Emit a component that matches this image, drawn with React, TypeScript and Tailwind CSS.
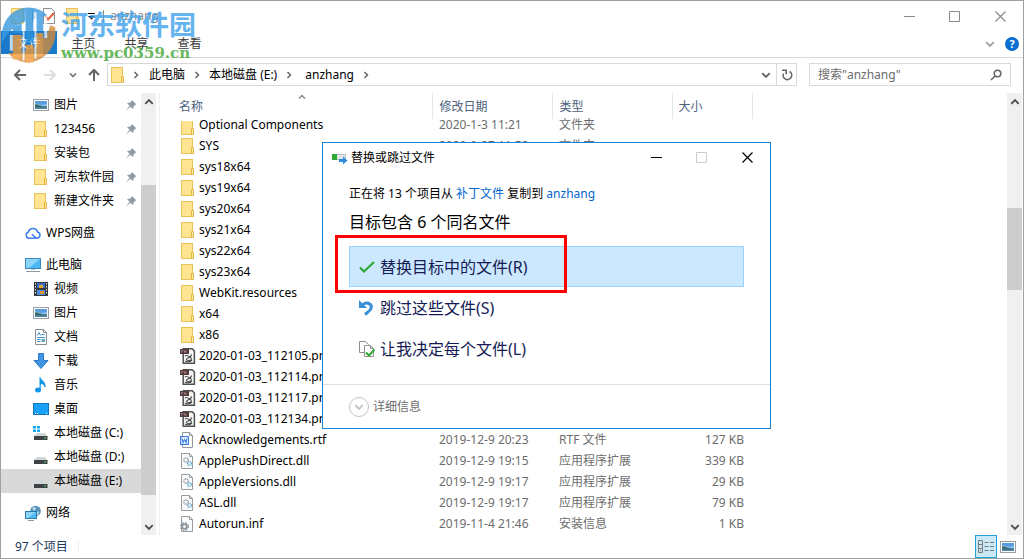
import React, { useState } from 'react';

const FolderIcon = () => (
  <svg className="h-4 w-4 shrink-0" viewBox="0 0 16 16">
    <rect x="1.5" y="0.5" width="11" height="15" fill="#ffe491" stroke="#e9c35a" />
    <path d="M11.5 9.5h2v6h-2z" fill="#ffe9a8" stroke="#e3b740" />
  </svg>
);

const PictureIcon = () => (
  <svg className="h-4 w-4 shrink-0" viewBox="0 0 16 16">
    <rect x="0.5" y="2.5" width="15" height="11" fill="#fff" stroke="#9aa0a6" />
    <path d="M2 4h12v8H2z" fill="#8cc4f0" />
    <path d="M2 4h12v3l-6 1-6-2z" fill="#5a9be0" />
    <path d="M2 7.500c2-1 4 1 7 1.500l5 .5V12H2z" fill="#3f6d6b" />
    <path d="M2 10.500h12V12H2z" fill="#4f86b0" />
  </svg>
);

const CloudIcon = () => (
  <svg className="h-4 w-4 shrink-0" viewBox="0 0 16 16" fill="none" stroke="#3f80f0" strokeWidth="1.600">
    <path d="M10 13.200H4A3.200 3.200 0 0 1 3.400 7a4.700 4.700 0 0 1 9.100 0 3.200 3.200 0 0 1 .1 6.200c-1.600 0-2.600-.9-3.600-2L7.300 9.500" strokeLinecap="round" />
  </svg>
);

const ComputerIcon = () => (
  <svg className="h-4 w-4 shrink-0" viewBox="0 0 16 16">
    <rect x="0.5" y="1.5" width="15" height="10" fill="#4db8f5" stroke="#3b87b8" />
    <path d="M1 2h14L4 11H1z" fill="#8bd5fb" />
    <path d="M1 14.500h14" stroke="#8b9aa5" />
    <path d="M6 12h4v1H6z" fill="#b8c6cf" />
  </svg>
);

const VideoIcon = () => (
  <svg className="h-4 w-4 shrink-0" viewBox="0 0 16 16">
    <rect x="1" y="1" width="14" height="14" fill="#33363b" />
    <path d="M4 2h8v5H4z" fill="#3c6fc4" />
    <path d="M4 9h8v5H4z" fill="#4d8ee0" />
    <path d="M6 4h4v3H6z" fill="#e0a92d" />
    <path d="M7 10h4v3H7z" fill="#d8932b" />
    <path d="M2.500 2v12M13.500 2v12" stroke="#e8e8e8" strokeDasharray="1.500 1.500" />
  </svg>
);

const DocumentIcon = () => (
  <svg className="h-4 w-4 shrink-0" viewBox="0 0 16 16">
    <path d="M2.500.5h8l3 3v12h-11z" fill="#fff" stroke="#8b8f94" />
    <path d="M10.500.5v3h3" fill="none" stroke="#8b8f94" />
    <path d="M4 6.500l2-3 1.500 3M8.500 5.500h3M4 8.500h8M4 10.500h3.500M4 12.500h3.500" fill="none" stroke="#3d8ed0" />
    <path d="M8.500 10h3.500v3H8.500z" fill="#69a6b5" />
  </svg>
);

const DownloadIcon = () => (
  <svg className="h-4 w-4 shrink-0" viewBox="0 0 16 16">
    <path d="M5.500.5h5v7h4.500L8 15.500 1 7.500h4.500z" fill="#3f96e8" stroke="#2c77c2" />
  </svg>
);

const MusicIcon = () => (
  <svg className="h-4 w-4 shrink-0" viewBox="0 0 16 16">
    <ellipse cx="5" cy="13" rx="3" ry="2.500" fill="#1296e8" />
    <path d="M7 13V0.500c1 3 5.500 4 5 9.500-.7-2.500-2.500-3.500-4-3.500" fill="#1296e8" stroke="#1296e8" />
  </svg>
);

const DesktopIcon = () => (
  <svg className="h-4 w-4 shrink-0" viewBox="0 0 16 16">
    <rect x="0.5" y="2.5" width="15" height="11" fill="#1ba1f7" stroke="#1273b5" />
    <path d="M2 12.500h1M4 12.500h1M13 12.500h1" stroke="#fff" />
  </svg>
);

const DriveIcon = ({ system = false }: { system?: boolean }) => (
  <svg className="h-4 w-4 shrink-0" viewBox="0 0 16 16">
    <path d="M4 8h8l2 3H1z" fill="#d2d5d9" />
    <path d="M1 11h13.500v4H1z" fill="#3e4246" />
    <path d="M11 13h2" stroke="#3ce05a" />
    {system && <path d="M0 1h3v2.500H0zM4 1h3v2.500H4zM0 4.500h3V7H0zM4 4.500h3V7H4z" fill="#17a9f0" />}
  </svg>
);

const NetworkIcon = () => (
  <svg className="h-4 w-4 shrink-0" viewBox="0 0 16 16">
    <circle cx="10.500" cy="6" r="5.300" fill="#5794bd" />
    <path d="M7 3l3-1 1 2-2 2zM11 6l3 1-1 3-3-1z" fill="#b8dcec" />
    <rect x="0.500" y="6.500" width="11" height="7" fill="#4db8f5" stroke="#2e79ac" />
    <path d="M1 7h10l-8 6H1z" fill="#8bd5fb" />
    <path d="M3 15.500h6" stroke="#8b9aa5" />
  </svg>
);

const PinIcon = () => (
  <svg className="h-3 w-3 shrink-0" viewBox="0 0 12 12">
    <path d="M7 1l4.500 4.500-1.300.2L8.500 7.500l-.2 2.800L5.500 7.800 1 11.500l3.500-4.700L2 4l2.800-.2L6.700 2z" fill="#8d9ba6" />
  </svg>
);

const ImageFileIcon = () => (
  <svg className="h-4 w-4 shrink-0" viewBox="0 0 16 16">
    <path d="M3.200.8h9l2.200 2.200v12.200H3.200z" fill="#f4f4f4" stroke="#505050" strokeWidth="1.500" />
    <path d="M0 1h9v5H0z" fill="#51383a" />
    <path d="M1.500 4.500v-2h1.500v1M4.500 4.500v-2l1.500 2v-2" fill="none" stroke="#c9a5a0" strokeWidth=".6" />
    <path d="M5 8c2-1.500 4 .5 5.500 1.500s1 3-1.500 3-3.500-1.500-1-2.500 3.500-1.500 3.500-3.500M5 13c2 1 5 1 7-1" fill="none" stroke="#4b4b4b" strokeWidth="1.100" />
  </svg>
);

const WordFileIcon = () => (
  <svg className="h-4 w-4 shrink-0" viewBox="0 0 16 16">
    <path d="M2.500.5h7l3 3v12h-10z" fill="#fff" stroke="#8f979f" />
    <path d="M9.500.5v3h3" fill="none" stroke="#8f979f" />
    <rect x="0.600" y="4.600" width="7.800" height="7.800" fill="#fff" stroke="#3f80e8" strokeWidth="1.200" />
    <path d="M2 6.500l1 4 1.500-3 1.500 3 1-4" fill="none" stroke="#3f80e8" strokeWidth="1.200" />
  </svg>
);

const DllFileIcon = () => (
  <svg className="h-4 w-4 shrink-0" viewBox="0 0 16 16">
    <path d="M1.500.5h8l3 3v12h-11z" fill="#f9fafb" stroke="#989da2" />
    <path d="M9.500.5v3h3" fill="none" stroke="#989da2" />
    <circle cx="6" cy="7" r="2.200" fill="none" stroke="#87939c" strokeWidth="1.300" strokeDasharray="1.200 .5" />
    <circle cx="9.500" cy="10.500" r="2" fill="#d6ecf8" stroke="#76aed0" strokeWidth="1.200" strokeDasharray="1.200 .5" />
  </svg>
);

const InfFileIcon = () => (
  <svg className="h-4 w-4 shrink-0" viewBox="0 0 16 16">
    <path d="M1.500.5h8l3 3v12h-11z" fill="#f9fafb" stroke="#989da2" />
    <path d="M9.500.5v3h3" fill="none" stroke="#989da2" />
    <circle cx="4.500" cy="10.500" r="3.800" fill="none" stroke="#8e979e" strokeWidth="1.600" strokeDasharray="1.600 1.400" />
    <circle cx="4.500" cy="10.500" r="2.400" fill="#eef1f3" stroke="#8e979e" strokeWidth="1.800" />
  </svg>
);

const Chevron = ({ className }: { className: string }) => (
  <svg className={className} viewBox="0 0 8 8" fill="none" stroke="currentColor" strokeWidth="1.500">
    <path d="M1 2.500l3 3 3-3" />
  </svg>
);

const treeItems = [
  { label: '图片', icon: <PictureIcon />, pinned: true },
  { label: '123456', icon: <FolderIcon />, pinned: true },
  { label: '安装包', icon: <FolderIcon />, pinned: true },
  { label: '河东软件园', icon: <FolderIcon />, pinned: true },
  { label: '新建文件夹', icon: <FolderIcon />, pinned: true },
  { label: 'WPS网盘', icon: <CloudIcon />, root: true },
  { label: '此电脑', icon: <ComputerIcon />, root: true },
  { label: '视频', icon: <VideoIcon /> },
  { label: '图片', icon: <PictureIcon /> },
  { label: '文档', icon: <DocumentIcon /> },
  { label: '下载', icon: <DownloadIcon /> },
  { label: '音乐', icon: <MusicIcon /> },
  { label: '桌面', icon: <DesktopIcon /> },
  { label: '本地磁盘 (C:)', icon: <DriveIcon system /> },
  { label: '本地磁盘 (D:)', icon: <DriveIcon /> },
  { label: '本地磁盘 (E:)', icon: <DriveIcon />, selected: true },
  { label: '网络', icon: <NetworkIcon />, root: true },
];

const folderNames = ['sys18x64', 'sys19x64', 'sys20x64', 'sys21x64', 'sys22x64', 'sys23x64', 'WebKit.resources', 'x64', 'x86'];
const imageNames = ['112105', '112114', '112117', '112134'];

const files = [
  { name: 'Optional Components', icon: <FolderIcon />, date: '2020-1-3 11:21', type: '文件夹', size: '' },
  { name: 'SYS', icon: <FolderIcon />, date: '2020-9-27 11:52', type: '文件夹', size: '' },
  // rows behind the dialog only show their name
  ...folderNames.map((name) => ({ name, icon: <FolderIcon />, date: '', type: '', size: '' })),
  ...imageNames.map((time) => ({ name: `2020-01-03_${time}.png`, icon: <ImageFileIcon />, date: '', type: '', size: '' })),
  { name: 'Acknowledgements.rtf', icon: <WordFileIcon />, date: '2019-12-9 20:23', type: 'RTF 文件', size: '127 KB' },
  { name: 'ApplePushDirect.dll', icon: <DllFileIcon />, date: '2019-12-9 19:15', type: '应用程序扩展', size: '339 KB' },
  { name: 'AppleVersions.dll', icon: <DllFileIcon />, date: '2019-12-9 19:17', type: '应用程序扩展', size: '29 KB' },
  { name: 'ASL.dll', icon: <DllFileIcon />, date: '2019-12-9 19:17', type: '应用程序扩展', size: '79 KB' },
  { name: 'Autorun.inf', icon: <InfFileIcon />, date: '2019-11-4 21:46', type: '安装信息', size: '1 KB' },
];

const WindowButtons = ({ inactiveMax = false }: { inactiveMax?: boolean }) => (
  <div className="flex h-full">
    <button aria-label="最小化" className="flex w-[46px] items-center justify-center">
      <svg className="h-[11px] w-[11px]" viewBox="0 0 11 11" stroke="currentColor"><path d="M0 5.500h11" /></svg>
    </button>
    <button aria-label="最大化" disabled={inactiveMax} className="flex w-[45px] items-center justify-center disabled:text-[#cccccc]">
      <svg className="h-[11px] w-[11px]" viewBox="0 0 11 11" fill="none" stroke="currentColor"><path d="M.5.5h10v10H.5z" /></svg>
    </button>
    <button aria-label="关闭" className="flex w-[46px] items-center justify-center">
      <svg className="h-[11px] w-[11px]" viewBox="0 0 11 11" stroke="currentColor" strokeWidth="1.200"><path d="M.5.5l10 10M10.500.5l-10 10" /></svg>
    </button>
  </div>
);

const TitleBar = () => (
  <div className="flex h-[30px] shrink-0 items-center justify-between text-[#8a8a8a]">
    <div className="flex items-center pl-[9px]">
      <svg className="h-4 w-4" viewBox="0 0 16 16">
        <path d="M1.500.5h12v15h-12z" fill="#ffe491" stroke="#e9c35a" />
        <path d="M8 7l1 2.500h2.500l-2 1.500.8 2.500L8 12l-2.300 1.500.8-2.500-2-1.500H7z" fill="#fff" />
      </svg>
      <span className="mx-1.5 h-3 w-px bg-[#8a8a8a]" />
      <svg className="mx-[2px] h-4 w-4" viewBox="0 0 16 16" fill="none">
        <path d="M2.500.5h8l3 3v12h-11z" fill="#fff" stroke="#8b8f94" />
        <path d="M4 8l3 3.500L13 5" stroke="#e0603c" strokeWidth="2" />
      </svg>
      <span className="mr-1 ml-1.5"><FolderIcon /></span>
      <svg className="h-3 w-3 text-black" viewBox="0 0 12 12">
        <path d="M3 3.500h7" stroke="currentColor" />
        <path d="M3 6h7L6.500 9.500z" fill="currentColor" />
      </svg>
      <span className="mx-1.5 h-3 w-px bg-[#8a8a8a]" />
      <h1>anzhang</h1>
    </div>
    <WindowButtons />
  </div>
);

const Ribbon = () => (
  <div className="flex h-[27px] shrink-0 items-start justify-between border-b border-[#dadbdc] text-[#3c3c3c]">
    <div className="flex">
      <button className="h-[23px] w-14 bg-[#1979ca] pt-0.5 text-white">文件</button>
      <button className="h-[23px] w-[53px] pt-0.5">主页</button>
      <button className="h-[23px] w-[53px] pt-0.5">共享</button>
      <button className="h-[23px] w-[53px] pt-0.5">查看</button>
    </div>
    <div className="flex h-[26px] items-center gap-2.5 pr-1">
      <button aria-label="展开功能区"><Chevron className="h-2.5 w-2.5 text-[#a0a0a0]" /></button>
      <button aria-label="帮助" className="flex h-3.5 w-3.5 items-center justify-center rounded-full bg-[#0a6fd0] text-[11px] font-bold text-white">?</button>
    </div>
  </div>
);

const AddressBar = () => (
  <div className="flex h-[35px] shrink-0 items-center pr-3 pb-0.5 text-[#666666]">
    <div className="flex w-[106px] items-center pl-3">
      <button aria-label="后退">
        <svg className="h-3.5 w-3.5" viewBox="0 0 14 14" fill="none" stroke="currentColor" strokeWidth="2"><path d="M13 7H2M7 2L2 7l5 5" /></svg>
      </button>
      <button aria-label="前进" className="ml-4 text-[#dddddd]">
        <svg className="h-3.5 w-3.5" viewBox="0 0 14 14" fill="none" stroke="currentColor" strokeWidth="2"><path d="M1 7h11M7 2l5 5-5 5" /></svg>
      </button>
      <button aria-label="最近位置" className="ml-3"><Chevron className="h-2 w-2" /></button>
      <button aria-label="上移" className="ml-2.5">
        <svg className="h-3.5 w-3.5" viewBox="0 0 14 14" fill="none" stroke="currentColor" strokeWidth="2"><path d="M7 13V2M2 7l5-5 5 5" /></svg>
      </button>
    </div>
    <nav className="flex h-[23px] flex-1 items-center border border-[#d9d9d9] pl-0.5 text-black">
      <FolderIcon />
      <Chevron className="mx-1.5 h-2 w-2 -rotate-90 text-[#666666]" />
      <a href="#pc" className="ml-[3px]">此电脑</a>
      <Chevron className="mx-2 h-2 w-2 -rotate-90 text-[#666666]" />
      <a href="#e">本地磁盘 (E:)</a>
      <Chevron className="mx-2 h-2 w-2 -rotate-90 text-[#666666]" />
      <a href="#anzhang" className="ml-1">anzhang</a>
      <Chevron className="mx-2 h-2 w-2 -rotate-90 text-[#666666]" />
      <div className="ml-auto flex h-full text-[#666666]">
        <button aria-label="历史记录" className="flex w-5 items-center justify-center"><Chevron className="h-2.5 w-2.5" /></button>
        <button aria-label="刷新" className="flex w-5 items-center justify-center border-l border-[#d9d9d9]">
          <svg className="h-3 w-3" viewBox="0 0 12 12" fill="none" stroke="currentColor" strokeWidth="1.600"><path d="M8.500 2.500a4.300 4.300 0 1 1-6 2M1 1.300h4.200v4" /></svg>
        </button>
      </div>
    </nav>
    <div className="ml-3 flex h-[23px] w-[20%] max-w-[202px] items-center border border-[#d9d9d9] px-2">
      <input aria-label="搜索" placeholder={'搜索"anzhang"'} className="min-w-0 flex-1 outline-none placeholder:text-[#6d6d6d]" />
      <svg className="h-3 w-3" viewBox="0 0 12 12" fill="none" stroke="currentColor" strokeWidth="1.600"><circle cx="7.500" cy="4.500" r="3.300" /><path d="M5 7l-4 4" /></svg>
    </div>
  </div>
);

const ScrollBar = ({ before, thumb }: { before: string; thumb: string }) => (
  <div className="flex w-[15px] shrink-0 flex-col bg-[#f0f0f0] text-[#505050]">
    <button aria-label="向上滚动" className="flex h-[17px] shrink-0 items-center justify-center">
      <Chevron className="h-2.5 w-2.5 rotate-180" />
    </button>
    <div className="flex min-h-0 flex-1 flex-col">
      <div className={before} />
      <div className={`bg-[#cdcdcd] ${thumb}`} />
    </div>
    <button aria-label="向下滚动" className="flex h-[17px] shrink-0 items-center justify-center">
      <Chevron className="h-2.5 w-2.5" />
    </button>
  </div>
);

const Sidebar = () => (
  <aside className="flex w-[159px] shrink-0 border-r border-[#f0f0f0]">
    <nav className="flex flex-1 flex-col">
      {treeItems.map((item, index) => (
        <a
          key={index}
          href="#"
          className={`flex h-6 shrink-0 items-center pr-1 text-black ${item.root ? 'mt-2 pl-6' : 'pl-8'} ${item.selected ? 'bg-[#d9d9d9]' : ''}`}
        >
          {item.icon}
          <span className="ml-[5px] flex-1 whitespace-nowrap">{item.label}</span>
          {item.pinned && <PinIcon />}
        </a>
      ))}
    </nav>
    <div className="mr-[3px] flex"><ScrollBar before="h-[18.400%]" thumb="h-[76%]" /></div>
  </aside>
);

const FileList = () => (
  <div className="min-w-0 flex-1 overflow-hidden">
    <table className="w-full table-fixed border-collapse text-[#6d6d6d]">
      <colgroup>
        <col className="w-[272px]" />
        <col className="w-[120px]" />
        <col className="w-[120px]" />
        <col className="w-20" />
        <col />
      </colgroup>
      <thead className="text-left text-[#4c607a]">
        <tr className="h-[26px]">
          <th className="relative border-r border-[#e5e5e5] p-0 pt-0.5 pl-[19px] font-normal">
            名称
            <Chevron className="absolute top-0 left-[138px] h-2 w-2 rotate-180 text-[#8a8a8a]" />
          </th>
          <th className="border-r border-[#e5e5e5] p-0 pt-0.5 pl-[7px] font-normal">修改日期</th>
          <th className="border-r border-[#e5e5e5] p-0 pt-0.5 pl-[7px] font-normal">类型</th>
          <th className="border-r border-[#e5e5e5] p-0 pt-0.5 pl-1.5 font-normal">大小</th>
          <th className="p-0" />
        </tr>
      </thead>
      <tbody className="leading-[21px] whitespace-nowrap">
        {files.map((file, index) => (
          // the topmost row is partly scrolled under the header
          <tr key={file.name} className={index === 0 ? 'h-4' : 'h-[21px]'}>
            <td className="p-0 pl-5">
              <div className={`flex text-black ${index === 0 ? 'h-4 items-end' : 'h-[21px] items-center'}`}>
                <span className={index === 0 ? 'flex h-3.5 items-end overflow-hidden' : 'flex'}>{file.icon}</span>
                <span className="ml-[3px]">{file.name}</span>
              </div>
            </td>
            <td className="p-0 pl-[7px]">
              <div className={`flex ${index === 0 ? 'h-4 items-end' : 'h-[21px] items-center'}`}>{file.date}</div>
            </td>
            <td className="p-0 pl-[7px]">
              <div className={`flex ${index === 0 ? 'h-4 items-end' : 'h-[21px] items-center'}`}>{file.type}</div>
            </td>
            <td className="p-0 pr-2 text-right leading-4">{file.size}</td>
            <td className="p-0" />
          </tr>
        ))}
      </tbody>
    </table>
  </div>
);

const ReplaceDialog = () => (
  <div role="dialog" aria-labelledby="dialog-title" className="absolute top-[141px] left-[321px] w-[449px] border border-[#1883d7] bg-white text-black">
    <div className="flex h-[29px] items-center justify-between">
      <div className="flex items-center gap-[3px] pl-[9px]">
        <svg className="h-4 w-4" viewBox="0 0 16 16">
          <path d="M.5 4.500h13v5H.5z" fill="#e4e6e8" stroke="#b5b9bd" />
          <path d="M0 4h5v6H0z" fill="#2fa836" />
          <path d="M7 9h4V6.500l4.500 4-4.500 4V12H7z" fill="#2f8de0" />
        </svg>
        <h2 id="dialog-title">替换或跳过文件</h2>
      </div>
      <WindowButtons inactiveMax />
    </div>
    <div className="px-[26px] pt-3 pb-[15px]">
      <p className="leading-5">
        正在将 13 个项目从 <a href="#source" className="text-[#0066cc]">补丁文件</a> 复制到 <a href="#anzhang" className="text-[#0066cc]">anzhang</a>
      </p>
      <p className="mt-1.5 mb-3 text-base leading-6">目标包含 6 个同名文件</p>
      <div className="flex flex-col text-base text-[#151c55]">
        <button className="flex h-[41px] items-center border border-[#99d1ff] bg-[#cce8ff] pl-[9px]">
          <svg className="mr-[5px] h-4 w-4" viewBox="0 0 16 16" fill="none" stroke="#2ea836" strokeWidth="2.200"><path d="M1 8.500l4 4L15 3" /></svg>
          替换目标中的文件(R)
        </button>
        <button className="flex h-[41px] items-center pl-2.5">
          <svg className="mr-[5px] h-4 w-4" viewBox="0 0 16 16" fill="none" stroke="#3a90d6" strokeWidth="3">
            <path d="M4 4.500C9 1 13.500 5 12 8.500c-.8 2-3 3.500-6 6" />
            <path d="M0 0v8h8z" fill="#3a90d6" stroke="none" />
          </svg>
          跳过这些文件(S)
        </button>
        <button className="flex h-[41px] items-center pl-2.5">
          <svg className="mr-[5px] h-4 w-4" viewBox="0 0 16 16" fill="#fff" stroke="#8f8f8f">
            <path d="M.5.5h6l3 3v8h-9z" />
            <path d="M5.500 4.500h6l3 3v8h-9z" />
            <path d="M11.500 4.500v3h3" fill="none" />
            <path d="M7 11.500l3 3 5.500-6" fill="none" stroke="#2ea836" strokeWidth="2" />
          </svg>
          让我决定每个文件(L)
        </button>
      </div>
    </div>
    <div className="flex h-[44px] items-center border-t border-[#dfdfdf] pl-[26px] text-[#6d6d6d]">
      <button className="flex items-center gap-1">
        <span className="flex h-5 w-5 items-center justify-center rounded-full border border-[#c4c4c4] text-[#c4c4c4]">
          <Chevron className="h-2.5 w-2.5" />
        </span>
        详细信息
      </button>
    </div>
    {/* highlight around the recommended choice */}
    <div className="pointer-events-none absolute top-[92px] left-3 h-[58px] w-[232px] border-[3px] border-[#ff0000]" />
  </div>
);

const Watermark = () => (
  <div className="pointer-events-none absolute top-0.5 left-0 flex items-start gap-1 opacity-80">
    <svg className="h-[60px] w-14" viewBox="0 0 57 60">
      {/* blue upper half, orange lower half */}
      <path d="M1 33C1 16 13 4 28 4c8 0 14 3 19 8L33 16V8h-8v10C14 22 6 30 1 40z" fill="#3a9be0" />
      <path d="M55 24c3 18-9 34-26 36-9 0-17-4-22-10 15 2 27-3 34-12 5-5 8-10 9-16z" fill="#d08a3c" />
      {/* pillars */}
      <path d="M25 5h8v35h-8zM12 25l9-5v10h-9z" fill="#2f93dc" />
      <path d="M12 32h9v25h-9zM25 42h8v18h-8zM36 30h7v24h-7z" fill="#f19a38" />
      <path d="M36 11h7v17h-7z" fill="#3a9be0" />
      {/* gaps between the pillars */}
      <path d="M22 20h2v38h-2zM34 9h2v47h-2zM44 13h3v22h-3zM9 32h3v16H9z" fill="#fff" fillOpacity=".9" />
    </svg>
    <div className="pt-1.5">
      <p className="text-[27px] leading-8 font-bold text-[#3fa2ec]">河东软件园</p>
      <p className="font-['DejaVu_Serif',serif] text-[15px] leading-6 font-bold text-[#44a838]">www.pc0359.cn</p>
    </div>
  </div>
);

export default function App() {
  const [view, setView] = useState('details');

  return (
    <div className="relative flex h-screen flex-col overflow-hidden border border-[#a0a0a0] bg-white font-['Noto_Sans','Noto_Sans_CJK_SC',sans-serif] text-xs">
      <TitleBar />
      <Ribbon />
      <AddressBar />
      <main className="flex min-h-0 flex-1 pr-px">
        <Sidebar />
        <FileList />
        <ScrollBar before="h-[24%]" thumb="h-[20%]" />
      </main>
      <footer className="flex h-[23px] shrink-0 items-center justify-between pr-1 pl-3.5 text-[#1e395b]">
        <div className="flex items-center">
          <span>97 个项目</span>
          <span className="ml-2.5 h-3 w-px bg-[#eeeeee]" />
        </div>
        <div className="flex h-full text-[#7a7a7a]">
          <button
            aria-label="详细信息"
            onClick={() => setView('details')}
            className={`flex h-full w-[22px] items-center justify-center border ${view === 'details' ? 'border-[#26a0da] bg-[#cbe8f6]' : 'border-transparent'}`}
          >
            <svg className="h-4 w-4" viewBox="0 0 16 16" fill="none" stroke="currentColor">
              <path d="M.5 1.500h4v12h-4zM.5 5.500h4M.5 9.500h4M6.500 3.500h4M12 3.500h4M6.500 7.500h4M12 7.500h4M6.500 11.500h4M12 11.500h4" />
              <path d="M2 11.500h1" stroke="#d03030" />
            </svg>
          </button>
          <button
            aria-label="大图标"
            onClick={() => setView('large')}
            className={`flex h-full w-[22px] items-center justify-center border ${view === 'large' ? 'border-[#26a0da] bg-[#cbe8f6]' : 'border-transparent'}`}
          >
            <PictureIcon />
          </button>
        </div>
      </footer>
      <ReplaceDialog />
      <Watermark />
    </div>
  );
}
